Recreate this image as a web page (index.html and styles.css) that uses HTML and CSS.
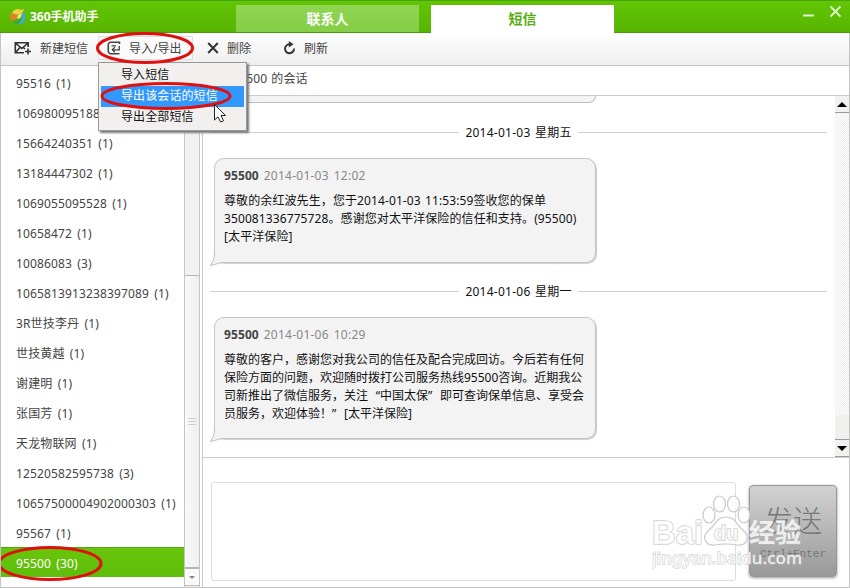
FILE: index.html
```html
<!DOCTYPE html>
<html lang="zh-CN">
<head>
  <meta charset="UTF-8" />
  <meta name="viewport" content="width=device-width, initial-scale=1.0"/>
  <title>360手机助手</title>
  <link rel="stylesheet" href="styles.css">
</head>
<body>
  <div class="window">
    <header class="titlebar">
      <div class="brand">
        <svg width="18" height="18" viewBox="0 0 18 18">
          <path d="M3 5C5 1 9 0 12 2L15 1L14 4C11 7 7 7 3 5Z" fill="#f6cf45"/>
          <path d="M2 5C1 8 1 11 3 13C6 12 8 10 9 7C6 7 4 6 2 5Z" fill="#ee7a2b"/>
          <path d="M14 4C17 7 17 12 13 16C11 16 10 17 9 16C13 13 14 9 12 7Z" fill="#3ca9e6"/>
          <path d="M3 13C7 13 10 10 12 7C14 10 12 14 9 16C6 16 4 15 3 13Z" fill="#43a82c"/>
          <path d="M9 7L13 5L12 9C11 10 10 11 8 11Z" fill="#f5e576"/>
        </svg>
        <span>360手机助手</span>
      </div>
      <nav class="tabs">
        <a class="tab">联系人</a>
        <a class="tab active">短信</a>
      </nav>
      <div class="controls">
        <svg width="40" height="20" viewBox="0 0 40 20">
          <path d="M2 14.500H13" stroke="#e0f5c9" stroke-width="2"/>
          <path d="M29.500 5.500L39.500 15.500M39.500 5.500L29.500 15.500" stroke="#e0f5c9" stroke-width="1.900"/>
        </svg>
      </div>
    </header>

    <div class="toolbar">
      <button class="tool new-sms">
        <svg width="18" height="14" viewBox="0 0 18 14" fill="none" stroke="#333" stroke-width="1.600">
          <path d="M14.200 6V1.800H1.300V11.800H10M1.500 2L7.800 7.500L14 2M1.500 11.500L6 6.500M9.500 6.500L11 8M14 7.500V13.500M11 10.500H17"/>
        </svg>
        <span>新建短信</span>
      </button>
      <button class="tool transfer">
        <svg width="14" height="14" viewBox="0 0 14 14" fill="none" stroke="#444" stroke-width="1.600">
          <path d="M12.500 3V1.300H3L1.300 3V11L3 12.700H12.500"/>
          <path d="M4.500 4.800H9M12.300 5V8.800H5.500M7.800 6.300L5.300 8.800L7.800 11.300" stroke-width="1.300"/>
        </svg>
        <span>导入/导出</span>
      </button>
      <button class="tool delete">
        <svg width="12" height="12" viewBox="0 0 12 12" stroke="#333" stroke-width="2">
          <path d="M1.200 1L10.800 11M10.800 1L1.200 11"/>
        </svg>
        <span>删除</span>
      </button>
      <button class="tool refresh">
        <svg width="13" height="14" viewBox="0 0 13 14">
          <path d="M6.500 3.200A4.500 4.500 0 1 0 11 7.500" fill="none" stroke="#333" stroke-width="1.900"/>
          <path d="M5.800 0L10.500 3.200L5.800 6.500Z" fill="#333"/>
        </svg>
        <span>刷新</span>
      </button>
    </div>

    <div class="main">
      <aside class="sidebar">
        <ul class="contacts">
          <li>95516 (1)</li>
          <li>1069800951886 (1)</li>
          <li>15664240351 (1)</li>
          <li>13184447302 (1)</li>
          <li>1069055095528 (1)</li>
          <li>10658472 (1)</li>
          <li>10086083 (3)</li>
          <li>1065813913238397089 (1)</li>
          <li>3R世技李丹 (1)</li>
          <li>世技黄越 (1)</li>
          <li>谢建明 (1)</li>
          <li>张国芳 (1)</li>
          <li>天龙物联网 (1)</li>
          <li>12520582595738 (3)</li>
          <li>10657500004902000303 (1)</li>
          <li>95567 (1)</li>
          <li class="selected">95500 (30)</li>
        </ul>
        <div class="side-scroll">
          <div class="side-thumb"><i></i></div>
          <div class="side-down"></div>
        </div>
      </aside>

      <section class="conversation">
        <h2 class="chat-title">与 95500 的会话</h2>
        <div class="chat">
          <div class="messages">
            <div class="previous"></div>
            <div class="date"><span>2014-01-03 星期五</span></div>
            <article class="bubble first">
              <div class="meta"><b>95500</b> 2014-01-03 12:02</div>
              <p>尊敬的余红波先生，您于2014-01-03 11:53:59签收您的保单<br>350081336775728。感谢您对太平洋保险的信任和支持。(95500)<br>[太平洋保险]</p>
              <svg class="tail" width="14" height="15" viewBox="0 0 14 15">
                <path d="M5 0C5 5 3 9 .5 12.500C5 12 8 9.500 14 9.500V0Z" fill="#f3f3f3"/>
                <path d="M4.500 0C4.500 5 3 9 .5 12.500C5 12 8 9.500 14 9.500" fill="none" stroke="#bdbdbd"/>
              </svg>
            </article>
            <div class="date second-date"><span>2014-01-06 星期一</span></div>
            <article class="bubble second">
              <div class="meta"><b>95500</b> 2014-01-06 10:29</div>
              <p>尊敬的客户，感谢您对我公司的信任及配合完成回访。今后若有任何<br>保险方面的问题，欢迎随时拨打公司服务热线95500咨询。近期我公<br>司新推出了微信服务，关注<span class="quote">“</span>中国太保<span class="quote close">”</span>即可查询保单信息、享受会<br>员服务，欢迎体验！<span class="quote close">”</span>[太平洋保险]</p>
              <svg class="tail" width="14" height="15" viewBox="0 0 14 15">
                <path d="M5 0C5 5 3 9 .5 12.500C5 12 8 9.500 14 9.500V0Z" fill="#f3f3f3"/>
                <path d="M4.500 0C4.500 5 3 9 .5 12.500C5 12 8 9.500 14 9.500" fill="none" stroke="#bdbdbd"/>
              </svg>
            </article>
          </div>
          <div class="chat-scroll">
            <div class="arrow up"></div>
            <div class="track"></div>
            <div class="thumb"></div>
            <div class="arrow down"></div>
          </div>
        </div>
        <div class="composer">
          <div class="input"></div>
          <button class="send"><span>发送</span><small>Ctrl+Enter</small></button>
        </div>
      </section>
    </div>

    <div class="menu">
      <div class="menu-item">导入短信</div>
      <div class="menu-item hover">导出该会话的短信</div>
      <div class="menu-item">导出全部短信</div>
    </div>

    <svg class="marks" width="850" height="588" viewBox="0 0 850 588">
      <g fill="none" stroke="#e01010" stroke-width="3">
        <ellipse cx="145" cy="48" rx="47.500" ry="14.500"/>
        <ellipse cx="166" cy="96" rx="64" ry="12.500"/>
        <ellipse cx="50" cy="563.500" rx="51" ry="16"/>
      </g>
      <path d="M214.500 104.500V120L218 116.800L220.600 122L223.500 120.800L221 115.500H225.500Z" fill="#fff" stroke="#222"/>
    </svg>

    <svg class="watermark" width="170" height="80" viewBox="0 0 170 80">
      <g fill="#fff" fill-opacity=".75" stroke="#c9c9c9" stroke-width="1.200">
        <ellipse cx="57" cy="26" rx="6" ry="8"/>
        <ellipse cx="67.500" cy="15" rx="6" ry="8"/>
        <ellipse cx="81.500" cy="15" rx="6" ry="8"/>
        <ellipse cx="92" cy="26" rx="6" ry="8"/>
        <path d="M74 28C64 28 64 36 57 41C49 48 53 57 63 56Q74 54 85 56C95 57 99 48 91 41C84 36 84 28 74 28Z"/>
      </g>
      <g class="wm-text">
        <text x="0" y="55" font-size="34" textLength="51" lengthAdjust="spacingAndGlyphs">Bai</text>
        <text x="62" y="51" font-size="20">du</text>
        <text x="97" y="53" font-size="26" textLength="52">经验</text>
        <text class="url" x="0" y="75" font-size="17" textLength="150" lengthAdjust="spacingAndGlyphs">jingyan.baidu.com</text>
      </g>
    </svg>
  </div>
</body>
</html>
```

FILE: styles.css
```css
:root {
  --line: #c8c8c8;
  --text: #444;
}
*{margin:0;padding:0;box-sizing:border-box;}
body {
  width:850px; height:588px; overflow:hidden; background:#fff; color:var(--text);
  font:12px/18px "Noto Sans", "Noto Sans CJK SC", sans-serif;
}
button {font:inherit; color:inherit; border:none; background:none;}
.window {position:relative; width:850px; height:588px; display:flex; flex-direction:column;}
.window::after {content:""; position:absolute; inset:33px 0 0; border:1px solid #c4c4c4; border-top:0; pointer-events:none;}

.titlebar {
  height:33px; flex:none; display:flex; align-items:flex-start;
  background:linear-gradient(#62c506, #58b401); border-top:1px solid #48a400; border-bottom:1px solid #469d08;
}
.brand {width:236px; height:31px; display:flex; align-items:center; gap:3px; padding-left:9px; color:#fff; font-weight:bold;}
.tabs {display:flex; gap:12px; padding-top:4px;}
.tab {
  width:183px; height:27px; line-height:28px; text-align:center; color:#fff; font-size:14px; font-weight:bold;
  background:linear-gradient(#8fd652, #85ce47);
}
.tab.active {height:29px; background:#fff; color:#55ad10;}
.controls {margin-left:auto; padding-right:9px; height:20px;}

.toolbar {
  height:33px; flex:none; display:flex; align-items:center; padding:0 0 2px 14px;
  background:linear-gradient(#fff, #eee); border-bottom:1px solid #c5c5c5;
}
.tool {height:24px; display:flex; align-items:center; white-space:nowrap;}
.tool span {padding-top:2px;}
.new-sms {width:84px; gap:8px;}
.transfer {width:95px; border:1px solid #ddd; background:#fafafa; padding-left:8px; gap:8px;}
.delete {margin-left:14px; gap:8px;}
.refresh {margin-left:32px; gap:8px;}

.main {flex:1; min-height:0; display:flex;}
.sidebar {width:203px; display:flex; border-right:1px solid var(--line);}
.contacts {width:184px; padding:1px 0 0 1px; list-style:none; overflow:hidden;}
.contacts li {height:30px; line-height:33px; padding-left:15px; white-space:nowrap; word-spacing:2px; letter-spacing:.14px;}
.contacts .selected {background:linear-gradient(#69c50a, #5fbd0c); color:#fff; border-top:1px solid #52a50c; line-height:31px;}
.side-scroll {width:16px; padding-bottom:2px; background:#f2f2f2; border:solid #c5c5c5; border-width:0 1px; display:flex; flex-direction:column;}
.side-thumb {
  margin-top:209px; flex:1; display:flex; align-items:center; justify-content:center;
  background:linear-gradient(90deg, #fafafa, #eee); border:solid #b5b5b5; border-width:1px 0 2px;
}
.side-thumb i {width:8px; height:8px; background:repeating-linear-gradient(#ccc 0 1px, transparent 1px 3px);}
.side-down {height:17px; display:grid; place-items:center; border-bottom:1px solid #bbb; background:#fafafa;}
.side-down::after {content:""; border:solid transparent; border-width:3px 3px 0; border-top-color:#888;}

.conversation {flex:1; min-width:0; display:flex; flex-direction:column;}
.chat-title {height:30px; padding:4px 0 0 13px; font-size:12px; font-weight:normal; word-spacing:1px; letter-spacing:.1px; border-bottom:1px solid #ccc;}
.chat {height:362px; display:flex; border-bottom:1px solid #ccc;}
.messages {width:631px; padding-left:7px;}
.previous {margin-left:4px; width:382px; height:7px; background:#f3f3f3; border:1px solid #bdbdbd; border-top:0; border-radius:0 0 10px 10px;}
.date {
  display:flex; align-items:center; gap:6px; height:18px; margin-top:20px; width:617px;
  color:#111; white-space:nowrap; letter-spacing:.25px; word-spacing:1px;
}
.date::before, .date::after {content:""; height:1px; background:#d0d0d0; flex:1;}
.date span {padding-top:1px;}
.second-date {margin-top:19px;}
.second-date span {padding-top:2px;}
.bubble {
  position:relative; width:382px; margin:17px 0 0 4px; padding:8px 9px; color:#111;
  background:#f3f3f3; border:1px solid #c5c5c5; border-radius:10px; box-shadow:1px 1px 1px #ccc;
}
.first {height:105px;}
.second {height:122px;}
.bubble p {margin-top:7px; white-space:nowrap;}
.first p {letter-spacing:.1px; word-spacing:1px;}
.meta {color:#888; letter-spacing:.25px; word-spacing:1.5px;}
.meta b {color:#444; letter-spacing:.1px;}
.quote {display:inline-block; width:12px; text-align:right;}
.quote.close {text-align:left;}
.tail {position:absolute; left:-5px; bottom:-6px;}

.chat-scroll {width:15px; margin-left:auto; display:flex; flex-direction:column; padding-right:1px;}
.arrow {height:17px; display:grid; place-items:center; background:#f1f1f0; border-bottom:1px solid #999;}
.arrow.down {height:18px; border-top:1px solid #999;}
.arrow::after {content:""; border:solid transparent; border-width:0 5px 5px; border-bottom-color:#000;}
.arrow.down::after {border-width:5px 5px 0; border-top-color:#000;}
.track {flex:1; background:repeating-conic-gradient(#eee 0 25%, #fff 0 50%) 0 0/2px 2px;}
.thumb {height:24px; background:#f0f0ef;}
.composer {flex:1; display:flex; align-items:flex-start; padding:24px 12px 0 8px; gap:13px;}
.input {width:525px; height:99px; border:1px solid #ddd; border-radius:3px; background:#fff;}
.send {
  width:88px; height:92px; margin-top:3px; display:flex; flex-direction:column; align-items:center; padding-top:18px;
  background:linear-gradient(#d2d2d2, #999); border:1px solid #969696; border-radius:4px;
  box-shadow:0 1px 3px #999; color:#777;
}
.send span {font:300 29px/30px "Noto Sans CJK SC", sans-serif;}
.send small {margin-top:13px; font:11px/14px "Liberation Mono", monospace;}

.menu {
  position:absolute; left:98px; top:62px; width:149px; height:69px; padding:2px;
  background:#f1f0ee; border:1px solid #999; box-shadow:2px 2px 2px #777; color:#111;
}
.menu-item {height:21px; line-height:20px; padding-left:20px; letter-spacing:.1px;}
.menu-item.hover {background:#3398fe; color:#fff;}
.marks {position:absolute; left:0; top:0; pointer-events:none;}
.watermark {position:absolute; left:652px; top:489px; pointer-events:none;}
.wm-text {
  fill:#fff; fill-opacity:.8; stroke:#bbb; stroke-width:1.6px; stroke-opacity:.65; paint-order:stroke;
  font-family:"Liberation Sans", "Noto Sans CJK SC", sans-serif; font-weight:bold;
}
.wm-text .url {font-family:"Noto Sans", sans-serif; font-weight:500; stroke-width:1.3px;}
```
